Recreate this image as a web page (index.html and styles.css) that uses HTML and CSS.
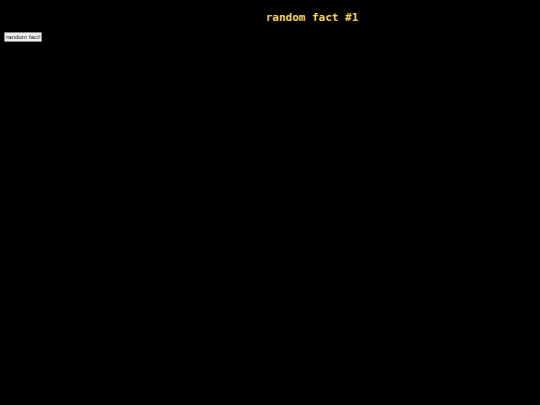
FILE: index.html
```html
<!DOCTYPE html>
<html>
<head>
<meta charset="utf-8">
<link rel="stylesheet" href="styles.css">
</head>
<body>
<h1 class="title">random fact #1</h1>
<button class="fact-btn" type="button">random fact!</button>
</body>
</html>
```

FILE: styles.css
```css
html, body {
  background: #000;
}
body {
  margin: 4px;
}
.title {
  font-family: "DejaVu Sans Mono", monospace;
  font-weight: bold;
  font-size: 11px;
  color: #f0d25a;
  text-align: center;
  margin: 7px 0 8px;
  padding-left: 84px;
}
.fact-btn {
  display: block;
  -webkit-appearance: none;
  appearance: none;
  font-family: "Liberation Sans", Arial, sans-serif;
  font-size: 6.2px;
  padding: 0 1px;
  margin: 0;
  background: #efefef;
  color: #222;
  border: 1px solid #8a8a8a;
  border-radius: 1px;
  height: 10px;
  line-height: 8px;
}
```
